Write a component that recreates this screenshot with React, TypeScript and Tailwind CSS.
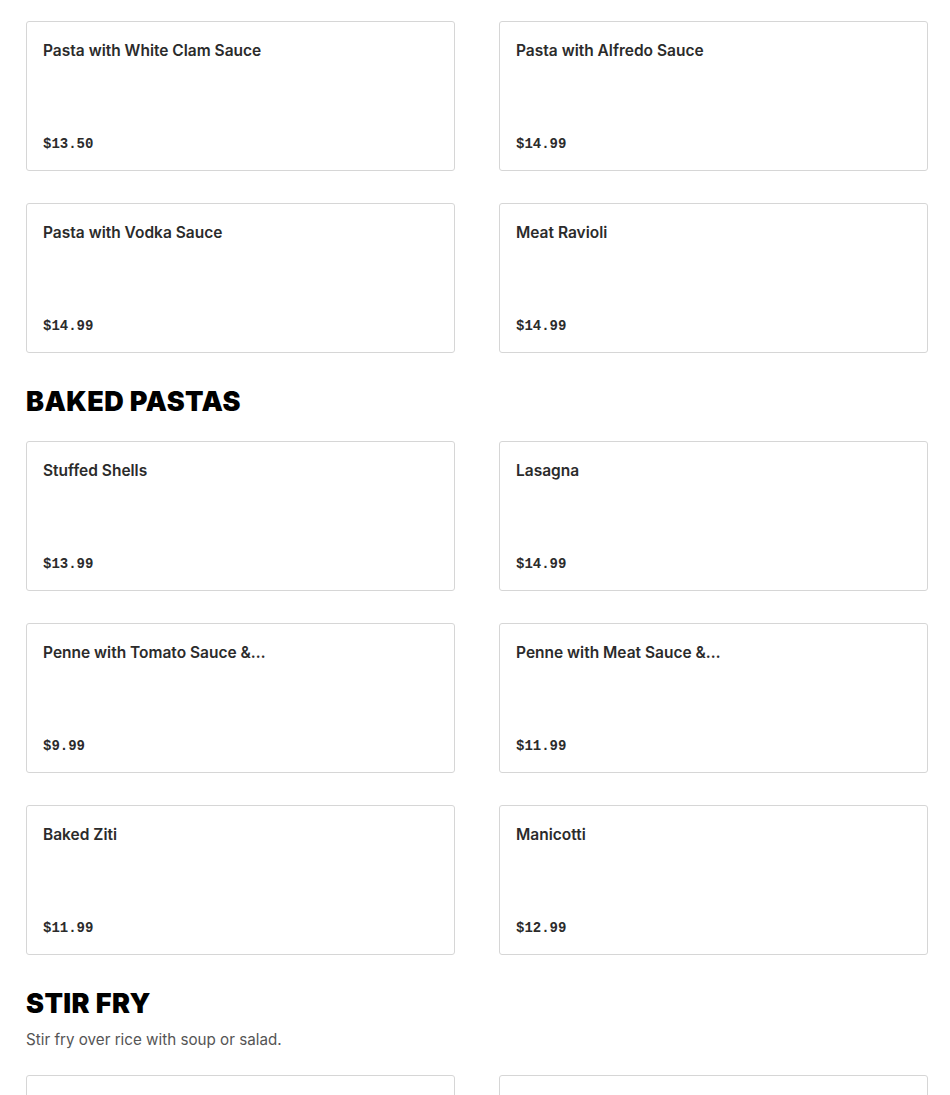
import React from 'react';

type Item = { name: string; price: string };

const sections: { title?: string; note?: string; items: Item[] }[] = [
  {
    items: [
      { name: 'Pasta with White Clam Sauce', price: '$13.50' },
      { name: 'Pasta with Alfredo Sauce', price: '$14.99' },
      { name: 'Pasta with Vodka Sauce', price: '$14.99' },
      { name: 'Meat Ravioli', price: '$14.99' },
    ],
  },
  {
    title: 'BAKED PASTAS',
    items: [
      { name: 'Stuffed Shells', price: '$13.99' },
      { name: 'Lasagna', price: '$14.99' },
      { name: 'Penne with Tomato Sauce &…', price: '$9.99' },
      { name: 'Penne with Meat Sauce &…', price: '$11.99' },
      { name: 'Baked Ziti', price: '$11.99' },
      { name: 'Manicotti', price: '$12.99' },
    ],
  },
  {
    title: 'STIR FRY',
    note: 'Stir fry over rice with soup or salad.',
    items: [],
  },
];

const MenuCard: React.FC<{ item?: Item }> = ({ item }) => (
  <div className="h-[150px] bg-white border border-[#d6d6d6] rounded-[3px] flex flex-col justify-between pl-4 pr-4 pt-[19px] pb-[16px]">
    {item && (
      <>
        <h4 className="text-[15.5px] leading-5 font-semibold text-[#2b2b2b] whitespace-nowrap">{item.name}</h4>
        <span className="text-[14px] leading-5 font-bold text-[#2b2b2b] font-['Liberation_Mono',monospace]">{item.price}</span>
      </>
    )}
  </div>
);

export default function App() {
  return (
    <div className="bg-white font-['Inter',sans-serif] pl-[26px] pr-[22px] pt-[21px] h-[1095px] overflow-hidden">
      {sections.map((s, i) => (
        <section key={i}>
          {s.title && (
            <h2 className="mt-[33px] mb-[-1px] text-[27px] leading-8 font-black text-black tracking-[0.015em]">{s.title}</h2>
          )}
          {s.note && <p className="mt-[11px] text-[15.2px] leading-5 text-[#555]">{s.note}</p>}
          <div className={`grid grid-cols-2 gap-x-[44px] gap-y-8 ${s.note ? 'mt-[25px]' : s.title ? 'mt-6' : ''}`}>
            {s.items.map((item) => (
              <MenuCard key={item.name} item={item} />
            ))}
            {s.items.length === 0 && (
              <>
                <MenuCard />
                <MenuCard />
              </>
            )}
          </div>
        </section>
      ))}
    </div>
  );
}
